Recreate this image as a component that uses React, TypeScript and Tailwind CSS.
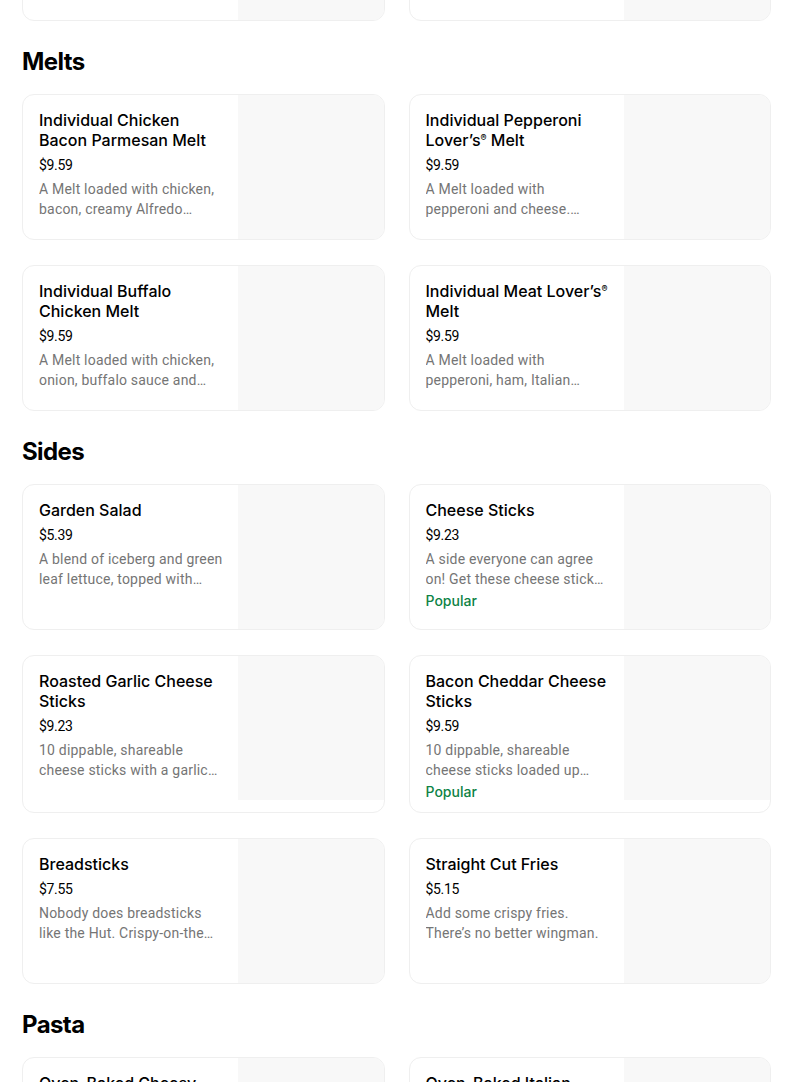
type Item = {
  name: string;
  price: string;
  desc: string;
  popular?: boolean;
};

type Section = {
  title: string;
  items: Item[];
};

const sections: Section[] = [
  {
    title: 'Melts',
    items: [
      {
        name: 'Individual Chicken Bacon Parmesan Melt',
        price: '$9.59',
        desc: 'A Melt loaded with chicken, bacon, creamy Alfredo sauce, and a sprinkle of parmesan, served with a dip.',
      },
      {
        name: 'Individual Pepperoni Lover’s® Melt',
        price: '$9.59',
        desc: 'A Melt loaded with pepperoni and cheese. Served with marinara for dipping.',
      },
      {
        name: 'Individual Buffalo Chicken Melt',
        price: '$9.59',
        desc: 'A Melt loaded with chicken, onion, buffalo sauce and cheese, served with a dip.',
      },
      {
        name: 'Individual Meat Lover’s® Melt',
        price: '$9.59',
        desc: 'A Melt loaded with pepperoni, ham, Italian sausage, bacon and cheese.',
      },
    ],
  },
  {
    title: 'Sides',
    items: [
      {
        name: 'Garden Salad',
        price: '$5.39',
        desc: 'A blend of iceberg and green leaf lettuce, topped with tomatoes, cucumbers and croutons.',
      },
      {
        name: 'Cheese Sticks',
        price: '$9.23',
        desc: 'A side everyone can agree on! Get these cheese sticks with marinara for dipping.',
        popular: true,
      },
      {
        name: 'Roasted Garlic Cheese Sticks',
        price: '$9.23',
        desc: '10 dippable, shareable cheese sticks with a garlic butter blend and marinara.',
      },
      {
        name: 'Bacon Cheddar Cheese Sticks',
        price: '$9.59',
        desc: '10 dippable, shareable cheese sticks loaded up with bacon and cheddar.',
        popular: true,
      },
      {
        name: 'Breadsticks',
        price: '$7.55',
        desc: 'Nobody does breadsticks like the Hut. Crispy-on-the outside, fluffy-on-the-inside.',
      },
      {
        name: 'Straight Cut Fries',
        price: '$5.15',
        desc: 'Add some crispy fries. There’s no better wingman.',
      },
    ],
  },
  {
    title: 'Pasta',
    items: [
      {
        name: 'Oven-Baked Cheesy Alfredo Pasta',
        price: '$10.79',
        desc: 'Rotini pasta with creamy Alfredo sauce, topped with melted cheese.',
      },
      {
        name: 'Oven-Baked Italian Meats Pasta',
        price: '$10.79',
        desc: 'Rotini pasta with marinara, pepperoni, Italian sausage and cheese.',
      },
    ],
  },
];

// small raised ® like the original menu
const ItemName = ({ name }: { name: string }) => {
  const parts = name.split('®');
  return (
    <>
      {parts.map((part, i) => (
        <span key={i}>
          {part}
          {i < parts.length - 1 && (
            <span className="relative -top-[5px] text-[9px] leading-none">®</span>
          )}
        </span>
      ))}
    </>
  );
};

const MenuCard = ({ item }: { item?: Item }) => (
  <div className="flex min-h-[146px] overflow-hidden rounded-xl border border-[#efefef] bg-white">
    <div className="flex-1 min-w-0 pl-4 pr-[14px] pt-[15px] pb-[10px]">
      {item && (
        <>
          <div className="pr-[2px] text-base leading-5 font-medium text-black">
            <ItemName name={item.name} />
          </div>
          <div className="mt-[5px] font-['Roboto'] text-sm leading-5 text-black tracking-tight">{item.price}</div>
          <div className="mt-1 font-['Roboto'] text-sm leading-5 tracking-[0.2px] text-[#757575] line-clamp-2">
            {item.desc}
          </div>
          {item.popular && (
            <div className="mt-[2px] text-sm leading-5 font-medium text-[#0e8345]">Popular</div>
          )}
        </>
      )}
    </div>
    <div className="w-[146px] h-[144px] shrink-0 bg-[#f8f8f8]" />
  </div>
);

export default function App() {
  return (
    <div
      className="min-h-screen bg-white overflow-hidden"
      style={{ fontFamily: 'Inter, "Noto Sans", sans-serif' }}
    >
      <div className="ml-[22px] w-[749px]">
        {/* row scrolled out of view */}
        <div className="-mt-[125px] grid grid-cols-2 gap-x-6">
          <MenuCard />
          <MenuCard />
        </div>

        {sections.map((section) => (
          <section key={section.title} className="mt-[25px]">
            <h2 className="text-2xl leading-8 font-bold text-black tracking-tight">{section.title}</h2>
            <div className="mt-4 grid grid-cols-2 gap-x-6 gap-y-[25px]">
              {section.items.map((item) => (
                <MenuCard key={item.name} item={item} />
              ))}
            </div>
          </section>
        ))}
      </div>
    </div>
  );
}
